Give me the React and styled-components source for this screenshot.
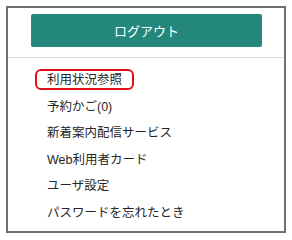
import React from "react";
import styled, { createGlobalStyle } from "styled-components";

const GlobalStyle = createGlobalStyle`
  body {
    margin: 0;
    background: #ffffff;
    font-family: "Liberation Sans", "Noto Sans CJK JP", sans-serif;
  }
`;

const items = [
  { label: "利用状況参照", active: true },
  { label: "予約かご(0)" },
  { label: "新着案内配信サービス" },
  { label: "Web利用者カード" },
  { label: "ユーザ設定" },
  { label: "パスワードを忘れたとき" },
];

const App = () => {
  return (
    <>
      <GlobalStyle />
      <Panel>
        <ButtonArea>
          <LogoutButton>ログアウト</LogoutButton>
        </ButtonArea>
        <MenuList>
          {items.map((item) => (
            <MenuItem key={item.label} $active={item.active}>
              {item.label}
            </MenuItem>
          ))}
        </MenuList>
      </Panel>
    </>
  );
};

const Panel = styled.div`
  box-sizing: border-box;
  margin: 6px 0 0 6px;
  width: 280px;
  height: 227px;
  border: 2px solid #707070;
  display: flex;
  flex-direction: column;
`;

const ButtonArea = styled.div`
  padding: 6px 22px 10px 23px;
  border-bottom: 1px solid #dddddd;
`;

const LogoutButton = styled.div`
  height: 33px;
  display: flex;
  align-items: center;
  justify-content: center;
  background-color: #23877b;
  border-radius: 2px;
  color: #ffffff;
  font-size: 13px;
`;

const MenuList = styled.div`
  display: flex;
  flex-direction: column;
  align-items: flex-start;
  gap: 5.6px;
  padding: 11px 0 0 27px;
`;

const MenuItem = styled.div`
  padding: 3px 10px 1px;
  border: 2px solid ${(p) => (p.$active ? "#e0101c" : "transparent")};
  border-radius: 6px;
  font-size: 12.5px;
  line-height: 13px;
  color: #262626;
`;

export default App;
